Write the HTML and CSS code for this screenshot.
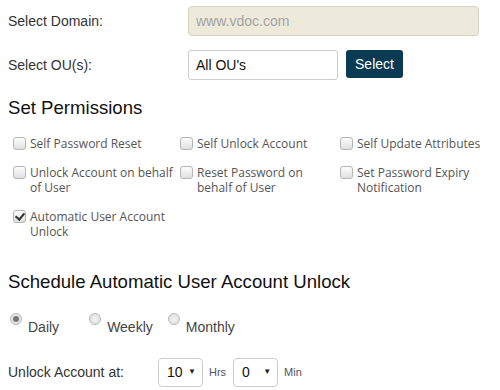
FILE: index.html
```html
<!DOCTYPE html>
<html lang="en">
<head>
  <meta charset="UTF-8" />
  <title>Unlock Settings</title>
  <link rel="stylesheet" href="styles.css">
</head>
<body>
  <!-- domain / OU -->
  <div class="form-row">
    <label class="field-label">Select Domain:</label>
    <input type="text" class="domain-input" placeholder="www.vdoc.com" disabled>
  </div>
  <div class="form-row">
    <label class="field-label">Select OU(s):</label>
    <input type="text" class="ou-input" value="All OU's">
    <button class="select-btn">Select</button>
  </div>

  <!-- permissions -->
  <h2 class="section-title">Set Permissions</h2>
  <div class="perm-grid">
    <label class="perm"><input type="checkbox"><span>Self Password Reset</span></label>
    <label class="perm"><input type="checkbox"><span>Self Unlock Account</span></label>
    <label class="perm"><input type="checkbox"><span>Self Update Attributes</span></label>
    <label class="perm"><input type="checkbox"><span>Unlock Account on behalf of User</span></label>
    <label class="perm"><input type="checkbox"><span>Reset Password on behalf of User</span></label>
    <label class="perm"><input type="checkbox"><span>Set Password Expiry Notification</span></label>
    <label class="perm"><input type="checkbox" checked><span>Automatic User Account Unlock</span></label>
  </div>

  <!-- schedule -->
  <h2 class="section-title schedule-title">Schedule Automatic User Account Unlock</h2>
  <div class="radio-row">
    <label class="radio daily"><input type="radio" name="freq" checked><span>Daily</span></label>
    <label class="radio"><input type="radio" name="freq"><span>Weekly</span></label>
    <label class="radio"><input type="radio" name="freq"><span>Monthly</span></label>
  </div>

  <div class="form-row time-row">
    <label class="field-label time-label">Unlock Account at:</label>
    <span class="select-wrap">
      <select>
        <option>10</option>
      </select>
    </span>
    <span class="unit">Hrs</span>
    <span class="select-wrap">
      <select>
        <option>0</option>
      </select>
    </span>
    <span class="unit">Min</span>
  </div>
</body>
</html>
```

FILE: styles.css
```css
body {
  margin: 0;
  padding: 6px 8px 0;
  font-family: "Liberation Sans", Arial, sans-serif;
  font-size: 14px;
  color: #333;
  background: #fff;
}

/* rows with label + controls */
.form-row {
  display: flex;
  align-items: center;
  height: 30px;
  margin-bottom: 14px;
}
.field-label {
  width: 180px;
  flex-shrink: 0;
}
.domain-input {
  width: 291px;
  height: 30px;
  box-sizing: border-box;
  border: 1px solid #d6d3c4;
  border-radius: 4px;
  background: #edeadb;
  padding: 0 7px;
  font: 14px "Liberation Sans", Arial, sans-serif;
}
.domain-input::placeholder {
  color: #a3a3a3;
}
.ou-input {
  width: 150px;
  height: 30px;
  box-sizing: border-box;
  border: 1px solid #ccc;
  border-radius: 3px;
  padding: 0 7px;
  font: 14px "Liberation Sans", Arial, sans-serif;
  color: #111;
}
.select-btn {
  margin-left: 8px;
  width: 57px;
  height: 28px;
  margin-top: -2px;
  border: none;
  border-radius: 3px;
  background: #0b3a53;
  color: #fff;
  font: 14px "Liberation Sans", Arial, sans-serif;
  cursor: pointer;
}

/* headings */
.section-title {
  margin: 0 0 17px;
  padding-top: 3px;
  font-size: 18.6px;
  font-weight: normal;
  color: #111;
  line-height: 22px;
}
.schedule-title {
  margin-top: 29px;
  margin-bottom: 20px;
}

/* permission checkboxes */
.perm-grid {
  display: grid;
  grid-template-columns: 167px 160px 1fr;
  row-gap: 14px;
}
.perm {
  display: flex;
  align-items: flex-start;
  font-family: "Open Sans", sans-serif;
  font-size: 12px;
  line-height: 15px;
  color: #555;
}
.perm input {
  appearance: none;
  flex-shrink: 0;
  width: 13px;
  height: 13px;
  margin: 1px 4px 0 5px;
  border: 1px solid #b5b5b5;
  border-radius: 3px;
  background: linear-gradient(#fcfcfc, #e0e0e0);
  position: relative;
}
.perm input:checked::after {
  content: "";
  position: absolute;
  left: 3px;
  top: 0;
  width: 4px;
  height: 7px;
  border: solid #333;
  border-width: 0 2px 2px 0;
  transform: rotate(40deg);
}

/* radios */
.radio-row {
  display: flex;
  gap: 13px;
  margin-bottom: 22px;
}
.radio {
  display: flex;
  align-items: flex-start;
  color: #444;
}
.radio.daily {
  margin-right: 15px;
}
.radio input {
  appearance: none;
  width: 12px;
  height: 12px;
  margin: 0 6px 0 2px;
  border: 1px solid #bbb;
  border-radius: 50%;
  background: radial-gradient(#f4f4f4, #d8d8d8);
  position: relative;
}
.radio input:checked::after {
  content: "";
  position: absolute;
  left: 2px;
  top: 2px;
  width: 6px;
  height: 6px;
  border-radius: 50%;
  background: #777;
}
.radio span {
  padding-top: 6px;
}

/* time selects */
.time-label {
  width: 150px;
}
.select-wrap {
  position: relative;
  display: inline-block;
  height: 29px;
}
.select-wrap select {
  appearance: none;
  width: 45px;
  height: 29px;
  border: 1px solid #ccc;
  border-radius: 4px;
  background: #fff;
  padding: 0 8px;
  font: 14px "Liberation Sans", Arial, sans-serif;
  color: #111;
}
.select-wrap::after {
  content: "\25BC";
  position: absolute;
  right: 7px;
  top: 50%;
  transform: translateY(-50%);
  font-size: 8px;
  line-height: 8px;
  color: #222;
  pointer-events: none;
}
.unit {
  font-size: 11px;
  color: #555;
  margin: 0 7px 0 6px;
}
```
